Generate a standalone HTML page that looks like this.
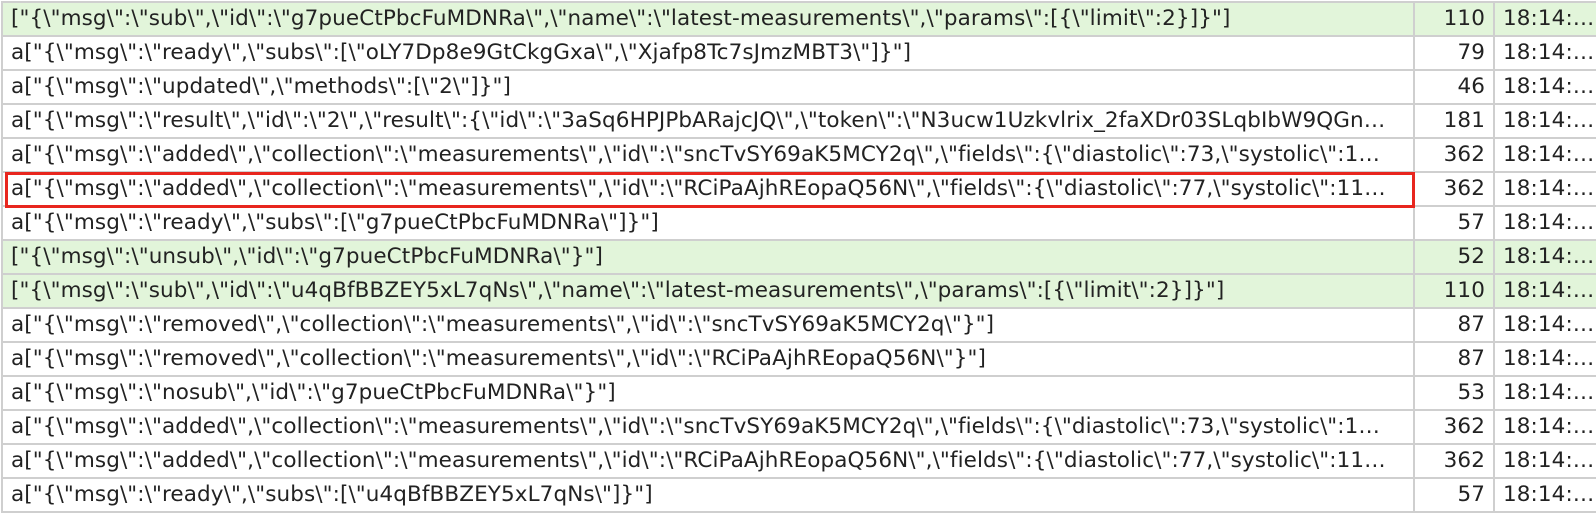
<!DOCTYPE html>
<html><head><meta charset="utf-8"><style>
html,body{margin:0;padding:0;background:#fff;width:1596px;height:514px;overflow:hidden}
table{position:absolute;left:1px;top:1px;border-collapse:collapse;table-layout:fixed;width:1640px;font-family:"DejaVu Sans","Liberation Sans",sans-serif;font-size:21.5px;letter-spacing:0.1px;color:#222}
td{height:32px;padding:0 8px;border:2px solid #cfcfcf;white-space:nowrap;overflow:hidden;line-height:32px}
tr.g td{background:#e2f5da}
td.c2{text-align:right}
.box{position:absolute;left:5px;top:172px;width:1404px;height:30px;border:3px solid #e8261e}
</style></head><body>
<table>
<colgroup><col style="width:1412px"><col style="width:80px"><col style="width:148px"></colgroup>
<tr class="g"><td class="c1">["{\"msg\":\"sub\",\"id\":\"g7pueCtPbcFuMDNRa\",\"name\":\"latest-measurements\",\"params\":[{\"limit\":2}]}"]</td><td class="c2">110</td><td class="c3">18:14:…</td></tr>
<tr><td class="c1">a["{\"msg\":\"ready\",\"subs\":[\"oLY7Dp8e9GtCkgGxa\",\"Xjafp8Tc7sJmzMBT3\"]}"]</td><td class="c2">79</td><td class="c3">18:14:…</td></tr>
<tr><td class="c1">a["{\"msg\":\"updated\",\"methods\":[\"2\"]}"]</td><td class="c2">46</td><td class="c3">18:14:…</td></tr>
<tr><td class="c1">a["{\"msg\":\"result\",\"id\":\"2\",\"result\":{\"id\":\"3aSq6HPJPbARajcJQ\",\"token\":\"N3ucw1Uzkvlrix_2faXDr03SLqbIbW9QGn…</td><td class="c2">181</td><td class="c3">18:14:…</td></tr>
<tr><td class="c1">a["{\"msg\":\"added\",\"collection\":\"measurements\",\"id\":\"sncTvSY69aK5MCY2q\",\"fields\":{\"diastolic\":73,\"systolic\":1…</td><td class="c2">362</td><td class="c3">18:14:…</td></tr>
<tr><td class="c1">a["{\"msg\":\"added\",\"collection\":\"measurements\",\"id\":\"RCiPaAjhREopaQ56N\",\"fields\":{\"diastolic\":77,\"systolic\":11…</td><td class="c2">362</td><td class="c3">18:14:…</td></tr>
<tr><td class="c1">a["{\"msg\":\"ready\",\"subs\":[\"g7pueCtPbcFuMDNRa\"]}"]</td><td class="c2">57</td><td class="c3">18:14:…</td></tr>
<tr class="g"><td class="c1">["{\"msg\":\"unsub\",\"id\":\"g7pueCtPbcFuMDNRa\"}"]</td><td class="c2">52</td><td class="c3">18:14:…</td></tr>
<tr class="g"><td class="c1">["{\"msg\":\"sub\",\"id\":\"u4qBfBBZEY5xL7qNs\",\"name\":\"latest-measurements\",\"params\":[{\"limit\":2}]}"]</td><td class="c2">110</td><td class="c3">18:14:…</td></tr>
<tr><td class="c1">a["{\"msg\":\"removed\",\"collection\":\"measurements\",\"id\":\"sncTvSY69aK5MCY2q\"}"]</td><td class="c2">87</td><td class="c3">18:14:…</td></tr>
<tr><td class="c1">a["{\"msg\":\"removed\",\"collection\":\"measurements\",\"id\":\"RCiPaAjhREopaQ56N\"}"]</td><td class="c2">87</td><td class="c3">18:14:…</td></tr>
<tr><td class="c1">a["{\"msg\":\"nosub\",\"id\":\"g7pueCtPbcFuMDNRa\"}"]</td><td class="c2">53</td><td class="c3">18:14:…</td></tr>
<tr><td class="c1">a["{\"msg\":\"added\",\"collection\":\"measurements\",\"id\":\"sncTvSY69aK5MCY2q\",\"fields\":{\"diastolic\":73,\"systolic\":1…</td><td class="c2">362</td><td class="c3">18:14:…</td></tr>
<tr><td class="c1">a["{\"msg\":\"added\",\"collection\":\"measurements\",\"id\":\"RCiPaAjhREopaQ56N\",\"fields\":{\"diastolic\":77,\"systolic\":11…</td><td class="c2">362</td><td class="c3">18:14:…</td></tr>
<tr><td class="c1">a["{\"msg\":\"ready\",\"subs\":[\"u4qBfBBZEY5xL7qNs\"]}"]</td><td class="c2">57</td><td class="c3">18:14:…</td></tr>
</table>
<div class="box"></div>
</body></html>
